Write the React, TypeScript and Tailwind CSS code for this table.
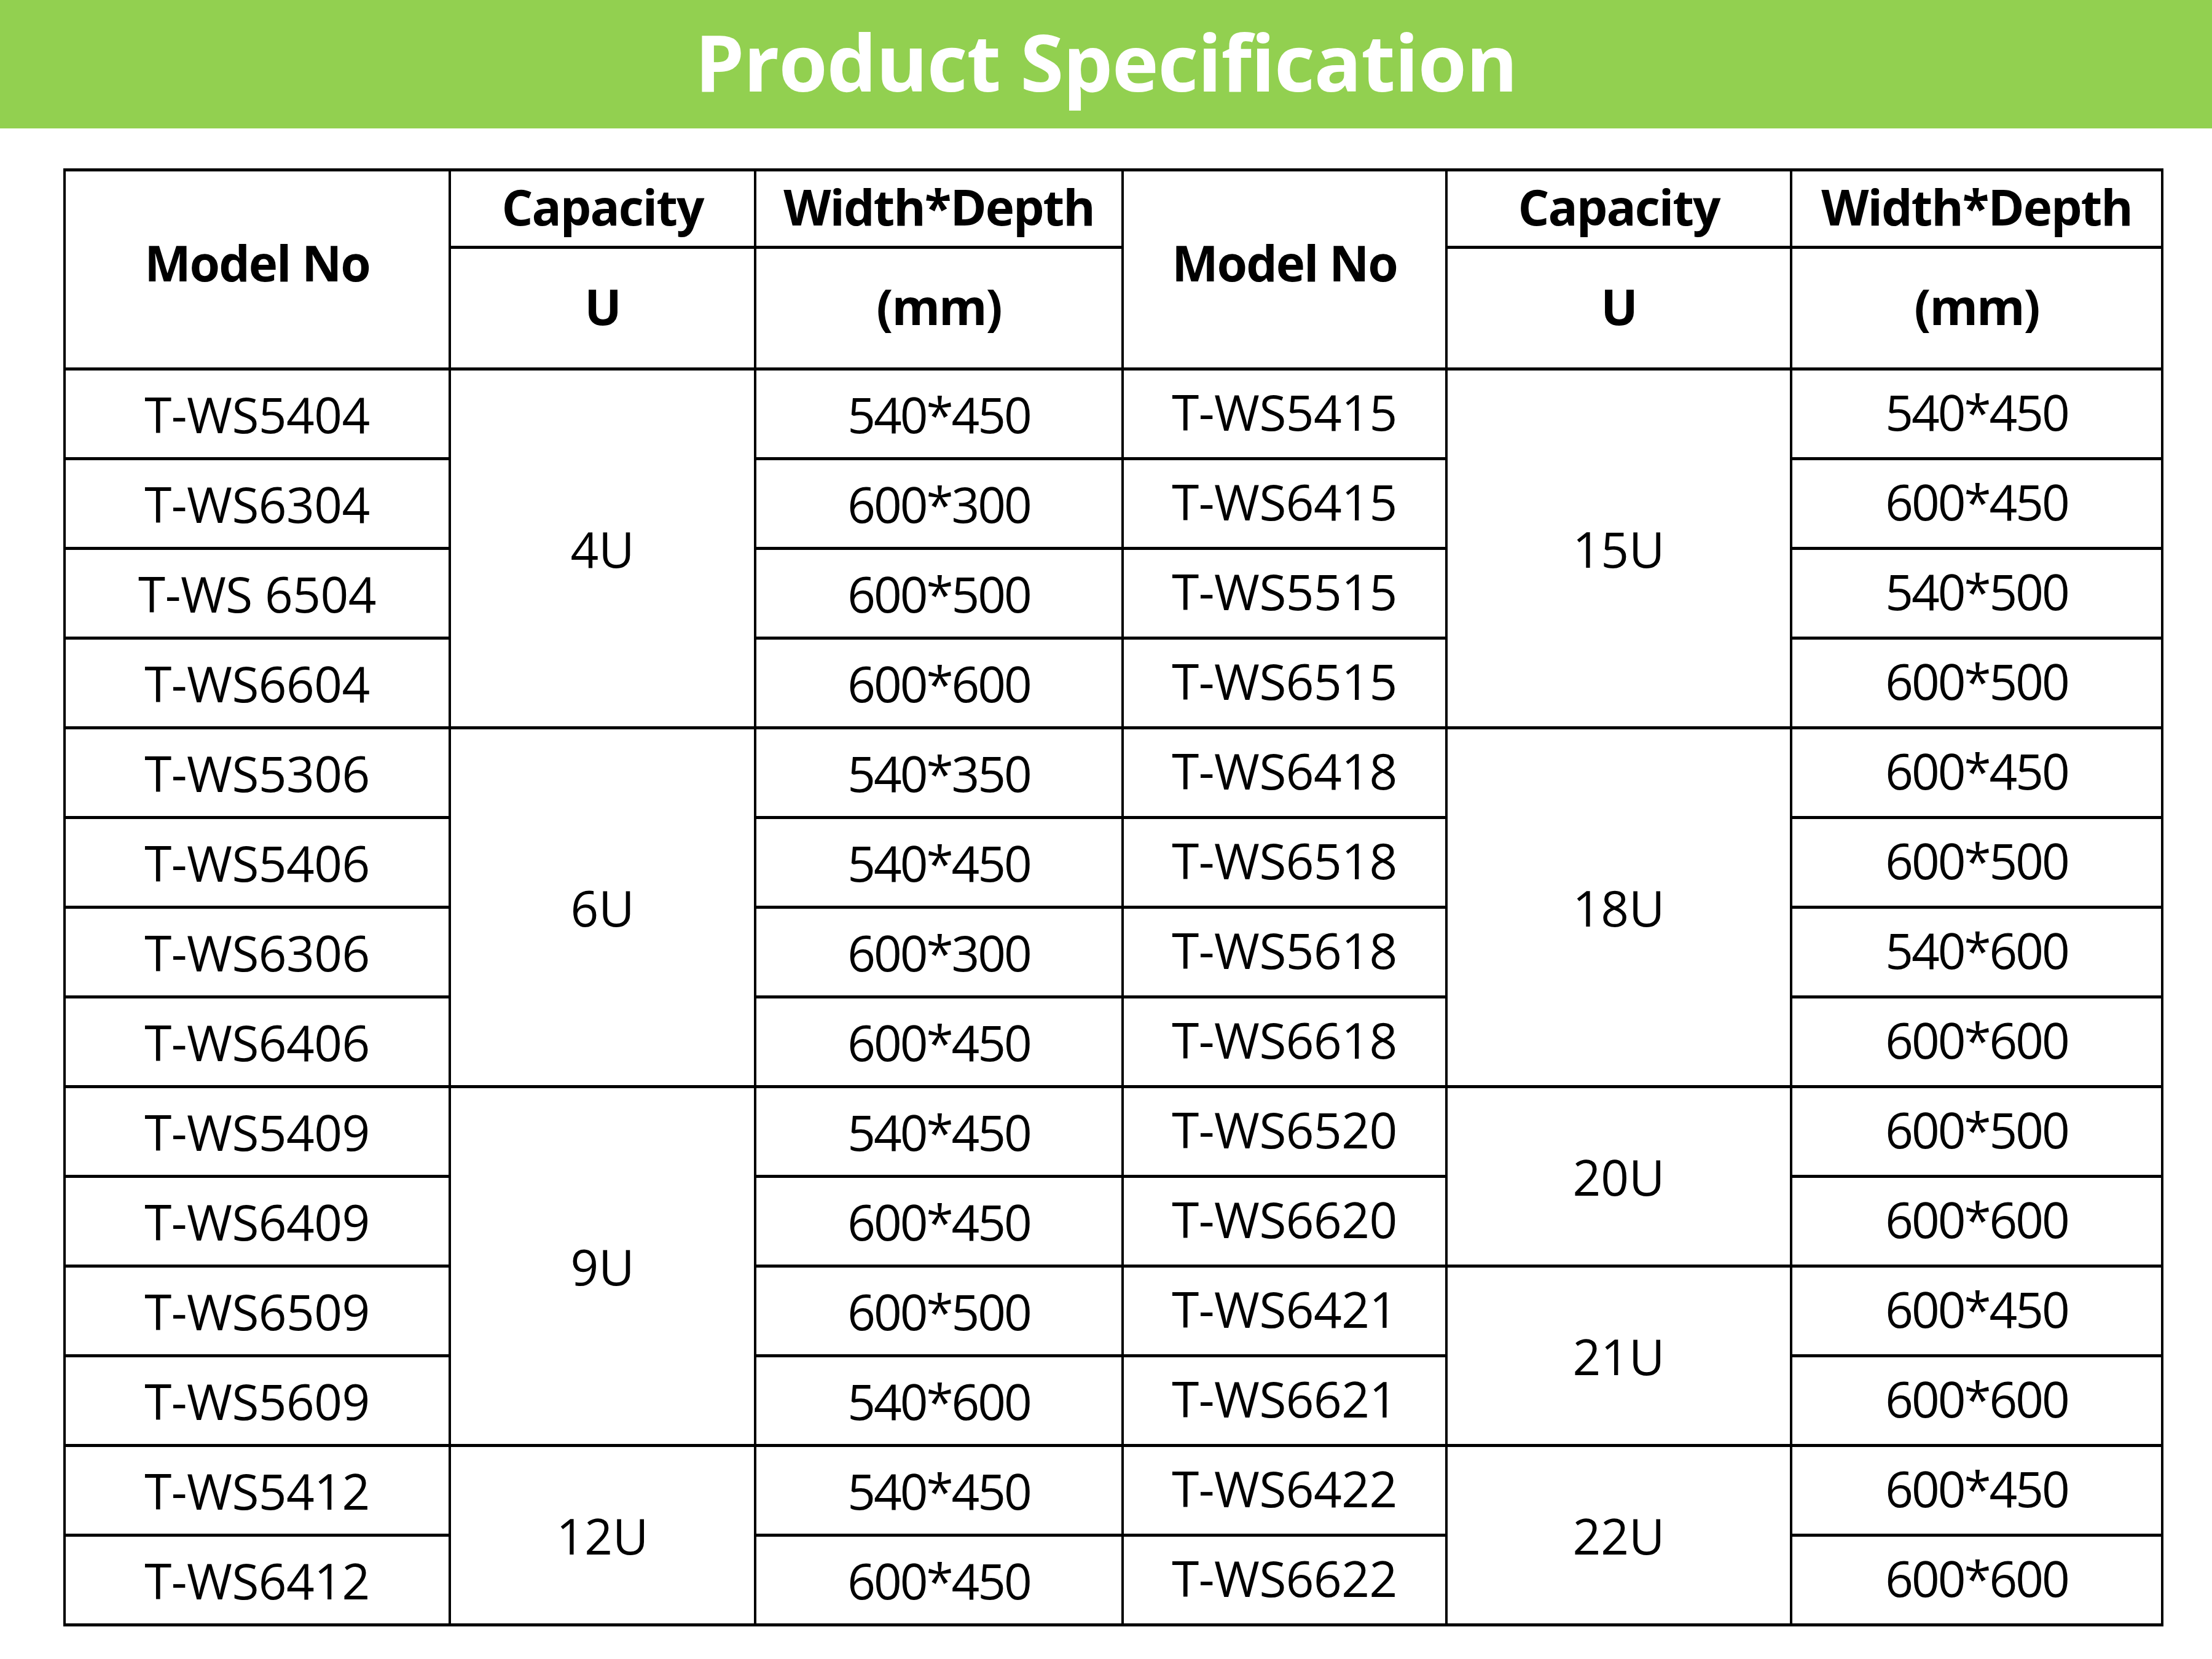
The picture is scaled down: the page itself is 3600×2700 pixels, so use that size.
import React from "react";

const leftRows = [
    ["T-WS5404", "540*450"],
    ["T-WS6304", "600*300"],
    ["T-WS 6504", "600*500"],
    ["T-WS6604", "600*600"],
    ["T-WS5306", "540*350"],
    ["T-WS5406", "540*450"],
    ["T-WS6306", "600*300"],
    ["T-WS6406", "600*450"],
    ["T-WS5409", "540*450"],
    ["T-WS6409", "600*450"],
    ["T-WS6509", "600*500"],
    ["T-WS5609", "540*600"],
    ["T-WS5412", "540*450"],
    ["T-WS6412", "600*450"],
];

const rightRows = [
    ["T-WS5415", "540*450"],
    ["T-WS6415", "600*450"],
    ["T-WS5515", "540*500"],
    ["T-WS6515", "600*500"],
    ["T-WS6418", "600*450"],
    ["T-WS6518", "600*500"],
    ["T-WS5618", "540*600"],
    ["T-WS6618", "600*600"],
    ["T-WS6520", "600*500"],
    ["T-WS6620", "600*600"],
    ["T-WS6421", "600*450"],
    ["T-WS6621", "600*600"],
    ["T-WS6422", "600*450"],
    ["T-WS6622", "600*600"],
];

// row index where a capacity group starts -> [label, rows spanned]
const leftGroups: Record<number, [string, number]> = {
    0: ["4U", 4],
    4: ["6U", 4],
    8: ["9U", 4],
    12: ["12U", 2],
};

const rightGroups: Record<number, [string, number]> = {
    0: ["15U", 4],
    4: ["18U", 4],
    8: ["20U", 2],
    10: ["21U", 2],
    12: ["22U", 2],
};

const cell = "border-x-4 border-y-[5px] border-black text-center align-middle p-0";
const head = cell + " font-bold tracking-[-2px] pb-[8px]";
const model = cell + " tracking-[-0.5px]";
const size = cell + " tracking-[-3px]";

export default function App() {
    return (
        <div className="w-[3600px] h-[2700px] bg-white font-['Open_Sans',sans-serif] text-black">
            <header className="h-[209px] bg-[#92d050] flex items-center justify-center pb-[10px]">
                <h1 className="text-white font-bold text-[128px] leading-none tracking-[-1px]">Product Specification</h1>
            </header>

            <table className="table-fixed border-collapse w-[3414px] ml-[103px] mt-[65px] text-[80px] leading-none">
                <colgroup>
                    <col className="w-[627px]" />
                    <col className="w-[497px]" />
                    <col className="w-[598px]" />
                    <col className="w-[527px]" />
                    <col className="w-[561px]" />
                    <col className="w-[604px]" />
                </colgroup>
                <thead>
                    <tr className="h-[126px]">
                        <th rowSpan={2} className={head + " pb-[24px]"}>Model No</th>
                        <th className={head}>Capacity</th>
                        <th className={head}>Width*Depth</th>
                        <th rowSpan={2} className={head + " pb-[24px]"}>Model No</th>
                        <th className={head}>Capacity</th>
                        <th className={head}>Width*Depth</th>
                    </tr>
                    <tr className="h-[198px]">
                        <th className={head}>U</th>
                        <th className={head}>(mm)</th>
                        <th className={head}>U</th>
                        <th className={head}>(mm)</th>
                    </tr>
                </thead>
                <tbody>
                    {leftRows.map((row, i) => (
                        <tr key={i} className="h-[146px]">
                            <td className={model}>{row[0]}</td>
                            {leftGroups[i] && (
                                <td rowSpan={leftGroups[i][1]} className={cell}>{leftGroups[i][0]}</td>
                            )}
                            <td className={size}>{row[1]}</td>
                            <td className={model + " pb-[8px]"}>{rightRows[i][0]}</td>
                            {rightGroups[i] && (
                                <td rowSpan={rightGroups[i][1]} className={cell}>{rightGroups[i][0]}</td>
                            )}
                            <td className={size + " pb-[8px]"}>{rightRows[i][1]}</td>
                        </tr>
                    ))}
                </tbody>
            </table>
        </div>
    );
}
